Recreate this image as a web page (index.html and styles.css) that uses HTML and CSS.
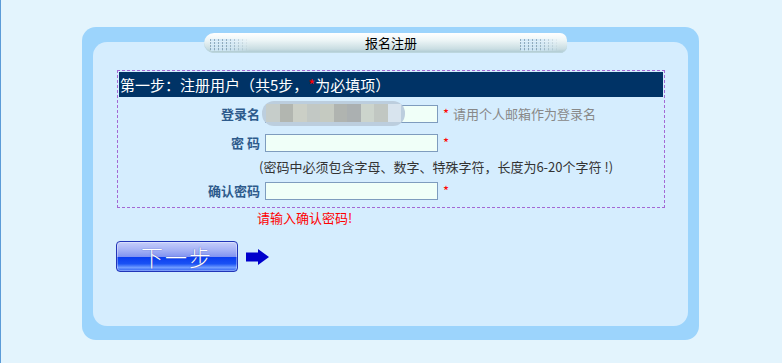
FILE: index.html
```html
<!DOCTYPE html>
<html lang="zh-CN">
<head>
<meta charset="utf-8">
<title>报名注册</title>
<link rel="stylesheet" href="styles.css">
</head>
<body>
<div class="page">
  <div class="outer">
    <div class="inner">
      <div class="tab">
        <span class="dots dots-left"></span>
        <span class="tab-title">报名注册</span>
        <span class="dots dots-right"></span>
      </div>
      <div class="formbox">
        <div class="step">第一步：注册用户（共5步，<span class="req">*</span>为必填项）</div>
        <div class="rows">
          <div class="row">
            <label class="lbl">登录名</label>
            <span class="field">
              <input class="txt" type="text">
              <span class="blur"><i></i><i></i><i></i><i></i><i></i><i></i><i></i><i></i><i></i><i></i></span>
            </span>
            <span class="req star">*</span>
            <span class="hint">请用个人邮箱作为登录名</span>
          </div>
          <div class="row">
            <label class="lbl">密 码</label>
            <span class="field"><input class="txt" type="password"></span>
            <span class="req star">*</span>
          </div>
          <div class="row note-row">
            <span class="note">(密码中必须包含字母、数字、特殊字符，长度为6-20个字符 !)</span>
          </div>
          <div class="row">
            <label class="lbl">确认密码</label>
            <span class="field"><input class="txt" type="password"></span>
            <span class="req star">*</span>
          </div>
        </div>
      </div>
      <div class="error">请输入确认密码!</div>
      <div class="actions">
        <button class="next" type="button">下一步</button>
        <svg class="arrow" width="24" height="16" viewBox="0 0 24 16"><polygon points="0,3.5 12,3.5 12,0 23,8 12,16 12,12.5 0,12.5" fill="#0000cc"/></svg>
      </div>
    </div>
  </div>
</div>
</body>
</html>
```
FILE: styles.css
```css
html, body {
  margin: 0;
  padding: 0;
}
body {
  background: #e3f4fd;
  border-left: 1px solid #5b9bd8;
  min-height: 363px;
  box-sizing: border-box;
  font-family: "Noto Sans CJK SC", "Noto Sans", sans-serif;
  font-size: 13px;
  color: #333;
}
.page {
  padding: 27px 0 0 81px;
}
.outer {
  width: 617px;
  height: 313px;
  box-sizing: border-box;
  padding: 15px 11px 14px 11px;
  background: #9cd4fc;
  border-radius: 14px;
}
.inner {
  height: 284px;
  background: #d5edfe;
  border-radius: 14px;
}
.tab {
  position: relative;
  top: -9px;
  margin-left: 111px;
  width: 363px;
  height: 20px;
  border-radius: 10px 7px 7px 10px;
  background: linear-gradient(#ffffff 0%, #eef6f7 35%, #c9dde2 80%, #a9c6cf 100%);
  box-shadow: inset 0 -1px 0 #bcd6de;
  display: flex;
  align-items: center;
  justify-content: space-between;
}
.tab-title {
  color: #000;
  font-size: 13px;
  line-height: 20px;
  margin-left: 12px;
}
.dots {
  width: 40px;
  height: 12px;
  margin-top: 3px;
  background-image: linear-gradient(90deg, transparent 1px, rgba(213,237,254,0.9) 1px), linear-gradient(#7b9bb3 2px, transparent 2px);
  background-size: 4px 3px, 4px 3px;
  background-color: transparent;
  opacity: 0.8;
}
.dots-left {
  margin-left: 6px;
  -webkit-mask-image: linear-gradient(90deg, #000 40%, transparent);
  mask-image: linear-gradient(90deg, #000 40%, transparent);
}
.dots-right {
  margin-right: 7px;
  -webkit-mask-image: linear-gradient(90deg, #000 40%, transparent);
  mask-image: linear-gradient(90deg, #000 40%, transparent);
}
.formbox {
  margin: 8px 0 0 24px;
  width: 548px;
  box-sizing: border-box;
  border: 1px dashed #a468d4;
  padding: 1px 1px 2px 1px;
}
.step {
  background: #003366;
  color: #fff;
  font-size: 15px;
  height: 25px;
  line-height: 25px;
  padding-left: 1px;
  white-space: nowrap;
}
.req {
  color: #ff0000;
}
.rows {
  padding-top: 2px;
}
.row {
  display: flex;
  align-items: center;
  height: 29px;
}
.note-row {
  height: 19px;
}
.lbl {
  width: 141px;
  text-align: right;
  font-weight: bold;
  color: #2e5b8c;
  margin-right: 5px;
  white-space: nowrap;
}
.field {
  position: relative;
  display: inline-flex;
}
.txt {
  width: 173px;
  height: 18px;
  box-sizing: border-box;
  margin: 0;
  padding: 0 2px;
  border: 1px solid #7e9cbe;
  background: #f0fff8;
  font-size: 12px;
  outline: none;
}
.blur {
  position: absolute;
  left: -3px;
  top: -4px;
  width: 143px;
  height: 25px;
  border-radius: 12px;
  background: #bccede;
  display: flex;
  overflow: hidden;
  padding: 3px 4px 4px 4px;
  box-sizing: border-box;
}
.blur i {
  flex: 1;
  background: #c6cdca;
}
.blur i:nth-child(2) { background: #b2b6b0; }
.blur i:nth-child(3) { background: #cbcfc6; }
.blur i:nth-child(4) { background: #c2c8c4; }
.blur i:nth-child(5) { background: #c5cac1; }
.blur i:nth-child(6) { background: #b0b4b0; }
.blur i:nth-child(7) { background: #abb0b1; }
.blur i:nth-child(8) { background: #ccd4cc; }
.blur i:nth-child(9) { background: #c1c7c2; }
.blur i:nth-child(10) { background: #d8e4ee; }
.star {
  margin-left: 5px;
  font-size: 13px;
}
.hint {
  margin-left: 4px;
  color: #888;
}
.note {
  margin-left: 140px;
  color: #333;
  white-space: nowrap;
}
.error {
  margin-left: 164px;
  height: 20px;
  line-height: 20px;
  color: #ff0000;
  font-size: 13px;
}
.actions {
  margin: 13px 0 0 23px;
  display: flex;
  align-items: center;
}
.next {
  width: 122px;
  height: 31px;
  margin: 0;
  padding: 0 0 2px 0;
  border: 1px solid #2235b8;
  border-radius: 4px;
  background: linear-gradient(#c6cefa 0%, #a2aff5 30%, #8294f1 50%, #0a3cf0 52%, #1a52f4 75%, #6f9cff 88%, #2c5ef2 100%);
  color: #fff;
  font-family: "Noto Sans CJK SC", sans-serif;
  font-size: 22px;
  font-weight: 300;
  letter-spacing: 2px;
  line-height: 28px;
  text-shadow: 0 0 1px #3040a0;
  box-shadow: inset 0 0 0 1px rgba(255,255,255,0.35);
}
.arrow {
  margin-left: 8px;
  display: block;
}
```
